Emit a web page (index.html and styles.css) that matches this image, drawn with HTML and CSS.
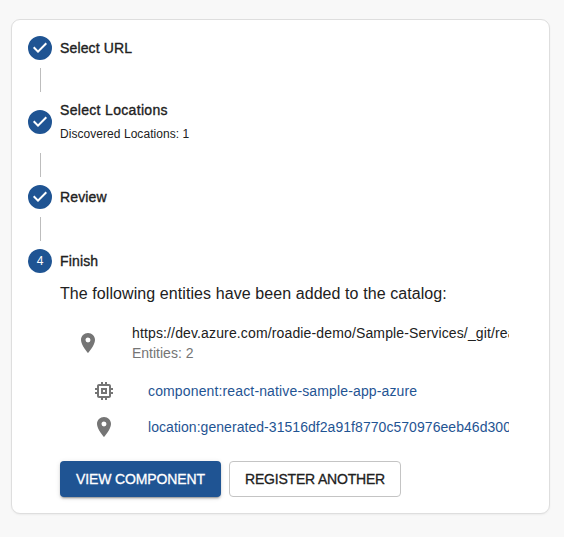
FILE: index.html
```html
<!DOCTYPE html>
<html lang="en">
<head>
<meta charset="utf-8">
<title>Register component</title>
<link rel="stylesheet" href="styles.css">
</head>
<body>
<svg width="0" height="0" class="defs">
  <symbol id="done" viewBox="0 0 24 24"><path d="M12 0a12 12 0 1 0 0 24 12 12 0 0 0 0-24zm-2 17l-5-5 1.4-1.4 3.6 3.6 7.6-7.6L19 8l-9 9z"/></symbol>
  <symbol id="pin" viewBox="0 0 24 24"><path d="M12 2C8.130 2 5 5.130 5 9c0 5.250 7 13 7 13s7-7.750 7-13c0-3.870-3.130-7-7-7zm0 9.500a2.500 2.500 0 0 1 0-5 2.500 2.500 0 0 1 0 5z"/></symbol>
  <symbol id="chip" viewBox="0 0 24 24"><path d="M15 9H9v6h6V9zm-2 4h-2v-2h2v2zm8-2V9h-2V7c0-1.100-.9-2-2-2h-2V3h-2v2h-2V3H9v2H7c-1.100 0-2 .9-2 2v2H3v2h2v2H3v2h2v2c0 1.100.9 2 2 2h2v2h2v-2h2v2h2v-2h2c1.100 0 2-.9 2-2v-2h2v-2h-2v-2h2zm-4 6H7V7h10v10z"/></symbol>
</svg>
<main class="card">
  <div class="step"><svg class="step-icon"><use href="#done"/></svg><span class="label label-url">Select URL</span></div>
  <div class="connector"></div>
  <div class="step step-tall">
    <svg class="step-icon"><use href="#done"/></svg>
    <div><div class="label">Select Locations</div><div class="caption">Discovered Locations: 1</div></div>
  </div>
  <div class="connector"></div>
  <div class="step"><svg class="step-icon"><use href="#done"/></svg><span class="label label-url">Review</span></div>
  <div class="connector"></div>
  <div class="step"><span class="number">4</span><span class="label label-url">Finish</span></div>
  <section class="content">
    <p class="message">The following entities have been added to the catalog:</p>
    <ul class="list">
      <li class="item item-main"><svg class="icon"><use href="#pin"/></svg><div class="text"><div class="url">https://dev.azure.com/roadie-demo/Sample-Services/_git/rea</div><div class="secondary">Entities: 2</div></div></li>
      <li class="item nested"><svg class="icon"><use href="#chip"/></svg><a class="text component">component:react-native-sample-app-azure</a></li>
      <li class="item nested"><svg class="icon"><use href="#pin"/></svg><a class="text location">location:generated-31516df2a91f8770c570976eeb46d300</a></li>
    </ul>
    <div class="actions"><button class="button primary">VIEW COMPONENT</button><button class="button outlined">REGISTER ANOTHER</button></div>
  </section>
</main>
</body>
</html>
```
FILE: styles.css
```css
* { box-sizing: border-box; }
body { margin: 0; padding: 19px 14px 0 11px; height: 537px; overflow: hidden; background: #f8f8f8; color: #212121; font: 14px/20px "Liberation Sans", Arial, sans-serif; }
.defs { display: none; }
.card { height: 495px; padding: 16px; background: #fff; border: 1px solid #dedede; border-radius: 9px; box-shadow: 0 1px 2px rgba(0,0,0,.05); }
.step { display: flex; align-items: center; gap: 8px; height: 24px; }
.step-tall { height: 45px; padding-bottom: 2px; }
.step-icon { width: 24px; height: 24px; fill: #1f5493; flex: none; }
.label { line-height: 20px; letter-spacing: .32px; -webkit-text-stroke: .35px currentColor; }
.label-url { letter-spacing: .15px; }
.caption { font-size: 12px; line-height: 20px; margin: 4px 0 -1px; letter-spacing: .05px; }
.connector { width: 1px; height: 24px; margin: 8px 0 8px 12px; background: #bdbdbd; }
.number { display: grid; place-items: center; width: 24px; height: 24px; border-radius: 50%; background: #1f5493; color: #fff; font-size: 12px; }
.content { padding: 9px 20px 0 32px; }
.message { margin: 0; font-size: 16px; line-height: 24px; letter-spacing: .08px; white-space: nowrap; }
.list { list-style: none; margin: 0; padding: 7px 0 8px; }
.item { display: flex; align-items: center; height: 36px; padding: 0 4px 0 16px; }
.item-main { height: 60px; }
.nested { padding-left: 32px; }
.icon { width: 24px; height: 24px; margin-right: 32px; fill: #757575; flex: none; }
.text { flex: 1; min-width: 0; overflow: hidden; white-space: nowrap; letter-spacing: .14px; }
.location { letter-spacing: .05px; }
.secondary { color: #757575; letter-spacing: 0; }
a { color: #1f5493; }
.actions { display: flex; gap: 8px; margin-top: 8px; }
.button { height: 36px; padding: 0; font: 14px/24px "Liberation Sans", Arial, sans-serif; letter-spacing: -.12px; -webkit-text-stroke: .3px currentColor; border-radius: 4px; white-space: nowrap; }
.primary { width: 161px; color: #fff; background: #1f5493; border: 0; box-shadow: 0 3px 1px -2px rgba(0,0,0,.2), 0 2px 2px rgba(0,0,0,.14), 0 1px 5px rgba(0,0,0,.12); }
.outlined { width: 172px; letter-spacing: -.2px; color: #212121; background: #fff; border: 1px solid #c4c4c4; }
```
